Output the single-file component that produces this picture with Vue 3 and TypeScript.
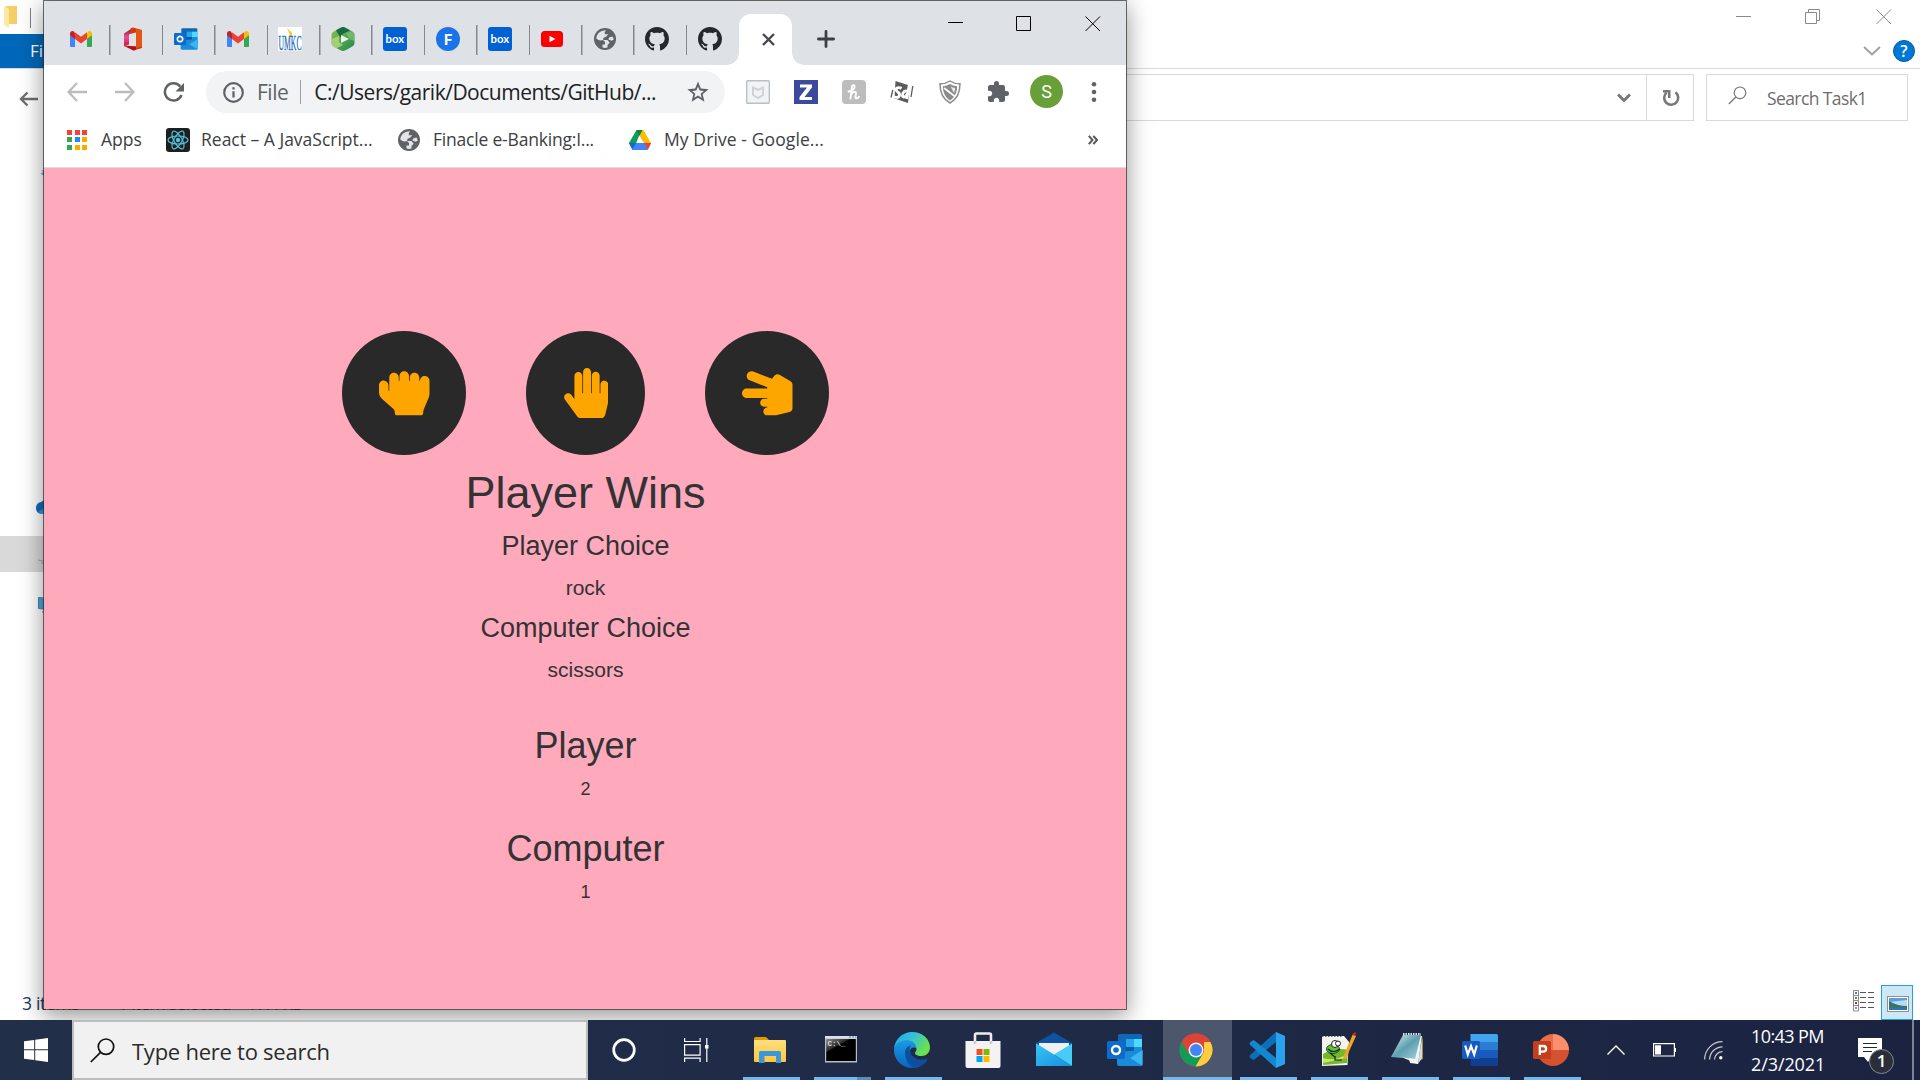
<script setup lang="ts">
interface Tab { icon: string; title: string }
interface TaskApp { icon: string; running?: boolean; active?: boolean; stacked?: boolean }

const tabs: Tab[] = [
  { icon: 'gmail', title: 'Gmail' },
  { icon: 'office', title: 'Office' },
  { icon: 'outlook', title: 'Outlook' },
  { icon: 'gmail', title: 'Gmail' },
  { icon: 'umkc', title: 'UMKC' },
  { icon: 'panopto', title: 'Panopto' },
  { icon: 'box', title: 'Box' },
  { icon: 'fcircle', title: 'F' },
  { icon: 'box', title: 'Box' },
  { icon: 'youtube', title: 'YouTube' },
  { icon: 'globe', title: 'Page' },
  { icon: 'github', title: 'GitHub' },
  { icon: 'github', title: 'GitHub' },
]

const extensions: string[] = ['mcafee', 'zotero', 'honey', 'sd', 'shield', 'puzzle']

const apps: TaskApp[] = [
  { icon: 'explorer', running: true },
  { icon: 'cmd', running: true, stacked: true },
  { icon: 'edge', running: true },
  { icon: 'store' },
  { icon: 'mail' },
  { icon: 'outlook' },
  { icon: 'chrome', running: true, active: true },
  { icon: 'vscode', running: true },
  { icon: 'npp', running: true },
  { icon: 'notepad', running: true },
  { icon: 'word', running: true },
  { icon: 'ppt', running: true },
]

const appGrid: string[] = ['#f44336', '#f44336', '#f44336', '#34a853', '#1e88f5', '#f9ab00', '#34a853', '#f9ab00', '#f9ab00']
</script>

<template>
  <div class="desktop">
    <svg class="sprite" width="0" height="0" aria-hidden="true">
      <defs>
        <linearGradient id="g-pan" x1="0" y1="0" x2="1" y2="1"><stop offset="0" stop-color="#8cc152" /><stop offset="1" stop-color="#1c8a4d" /></linearGradient>
        <linearGradient id="g-off" x1="0" y1="0" x2="0" y2="1"><stop offset="0" stop-color="#8f1020" /><stop offset="0.5" stop-color="#e8508e" /><stop offset="1" stop-color="#d0104c" /></linearGradient>
        <linearGradient id="g-edge" x1="0" y1="0" x2="1" y2="0.5"><stop offset="0" stop-color="#1fa6ea" /><stop offset="0.5" stop-color="#35c1d8" /><stop offset="1" stop-color="#6ae34a" /></linearGradient>
        <linearGradient id="g-edge2" x1="0" y1="0" x2="0" y2="1"><stop offset="0" stop-color="#1a9be4" /><stop offset="1" stop-color="#0a63c0" /></linearGradient>
        <linearGradient id="g-pad" x1="0" y1="0" x2="1" y2="1"><stop offset="0" stop-color="#d9eef3" /><stop offset="0.5" stop-color="#5f9fb0" /><stop offset="1" stop-color="#a8d4dd" /></linearGradient>
        <linearGradient id="g-fold" x1="0" y1="0" x2="0" y2="1"><stop offset="0" stop-color="#ffdf7e" /><stop offset="1" stop-color="#fdc63c" /></linearGradient>
        <linearGradient id="g-cmd" x1="0" y1="0" x2="0.6" y2="0.8"><stop offset="0" stop-color="#8a8a8a" /><stop offset="0.45" stop-color="#2c2c2c" /><stop offset="0.5" stop-color="#000" /></linearGradient>
        <linearGradient id="g-mail" x1="0" y1="0" x2="1" y2="1"><stop offset="0" stop-color="#3fc8f5" /><stop offset="1" stop-color="#0f84d8" /></linearGradient>
        <symbol id="i-gmail" viewBox="0 0 24 24">
          <path fill="#4285f4" d="M1 6v13q0 1 1 1h4v-9z" /><path fill="#34a853" d="M23 6v13q0 1-1 1h-4v-9z" />
          <path fill="#fbbc04" d="M18 6.500v5.500l5-3.800V6.500c0-2.500-2.500-3.200-4-2z" /><path fill="#c5221f" d="M6 6.500V12L1 8.200V6.500c0-2.500 2.500-3.200 4-2z" />
          <path fill="#ea4335" d="M6 12V5.300l6 4.500 6-4.500V12l-6 4.600z" />
        </symbol>
        <symbol id="i-office" viewBox="0 0 24 24">
          <path fill="url(#g-off)" d="M3 6.500 12 .8v5L8 7.500v10l-5 1.700z" /><path fill="#d83b01" d="M12 .5 21 3v18l-8.500 2.500L4.500 18.500 15 19.500V5.500L9.500 6.800V1.500z" />
          <path fill="#f2692c" d="M15 2v19l6-1.500V3.500z" opacity=".55" /><path fill="#b00f1c" d="m3 19 12 .5v3.300l-2.500.7z" />
        </symbol>
        <symbol id="i-outlook" viewBox="0 0 36 36">
          <rect x="11" y="2" width="24" height="26" rx="1.500" fill="#1066b8" /><path fill="#28a8ea" d="M19 7h8v8h-8z" /><path fill="#50d9ff" d="M27 7h8v8h-8z" /><path fill="#0a5aa8" d="M19 15h8v7h-8z" /><path fill="#1490df" d="M27 15h8v5h-8z" />
          <path fill="#0b3f78" d="M11 17l12 8 12-7v6H11z" /><path fill="#1b8ad8" d="M10 20v12q0 2 2 2h22q1.500 0 1.500-2V18z" /><path fill="#39b6f0" d="m23 26 12.500-8v14q0 1-.5 1.500z" />
          <rect x="0" y="9" width="18" height="18" rx="1.500" fill="#0c6cc9" /><circle cx="9" cy="18" r="4" fill="none" stroke="#fff" stroke-width="2.400" />
        </symbol>
        <symbol id="i-umkc" viewBox="0 0 24 24">
          <rect width="24" height="24" fill="#fff" /><path fill="#f2c420" d="m9 1 5 5v4h-4l2-2z" />
          <text x="0.500" y="23" textLength="23" lengthAdjust="spacingAndGlyphs" font-family="Liberation Serif, serif" font-size="21" fill="#1768b4" stroke="#1768b4" stroke-width=".3">UMKC</text>
        </symbol>
        <symbol id="i-panopto" viewBox="0 0 24 24">
          <path fill="url(#g-pan)" d="M12 0q2 0 10 5 1.500 1 1.500 3v8q0 2-1.500 3-8 5-10 5T2 19Q.5 18 .5 16V8q0-2 1.500-3 8-5 10-5z" /><path fill="#176c46" d="M5 3.500Q10 0 12 0t7 3.500l-7 3.300-2.500 3.700z" /><path fill="#b7d77a" d="M.5 12 8 9v6l4 3-7 3.500Q1 19 .5 17z" opacity=".8" /><path fill="#8cc680" d="m15 6 6-1.500q2 1.500 2.500 4V14l-5-2z" opacity=".6" /><path fill="#e9f4e6" d="m10 8 8 4-8 4z" />
        </symbol>
        <symbol id="i-box" viewBox="0 0 24 24">
          <rect width="24" height="24" rx="3" fill="#0061d5" /><text x="2.600" y="16" textLength="18.500" lengthAdjust="spacingAndGlyphs" font-family="Lato, sans-serif" font-weight="700" font-size="11.500" fill="#fff">box</text>
        </symbol>
        <symbol id="i-fcircle" viewBox="0 0 24 24">
          <circle cx="12" cy="12" r="12" fill="#1a73e8" /><text x="12" y="17.500" text-anchor="middle" font-family="Roboto, sans-serif" font-weight="700" font-size="15" fill="#fff">F</text>
        </symbol>
        <symbol id="i-youtube" viewBox="0 0 24 24"><rect x="1" y="4" width="22" height="16" rx="3.500" fill="#f00" /><path fill="#fff" d="m9.500 8.800 6 3.200-6 3.200z" /></symbol>
        <symbol id="i-globe" viewBox="0 0 24 24">
          <circle cx="12" cy="12" r="11" fill="#5f6368" /><path fill="#e1e4e8" d="M13 3.200c-6 .2-9.500 4-9.700 8.300 2 2 4.700 2.500 6.700 1.500l2 2v2.500h-2.500v3.100c1.500.4 3.500.4 5-.1v-2.400l2.200-2.300-2.200-2.800h-4.200V11l3-1.500 2-2.300h-3.500V5z" /><path fill="#e1e4e8" d="M19.500 9.500 16 10.500l-.5 2 3 1.200 2.200-1q0-1.500-1.200-3.200z" />
        </symbol>
        <symbol id="i-github" viewBox="0 0 16 16">
          <path fill="#24292e" d="M8 0C3.580 0 0 3.580 0 8c0 3.540 2.290 6.530 5.470 7.590.4.070.55-.17.55-.38 0-.19-.01-.82-.01-1.490-2.010.37-2.530-.49-2.690-.94-.09-.23-.48-.94-.82-1.130-.28-.15-.68-.52-.01-.53.63-.01 1.080.58 1.230.82.72 1.210 1.870.87 2.330.66.07-.52.28-.87.51-1.070-1.780-.2-3.640-.89-3.640-3.950 0-.87.31-1.590.82-2.150-.08-.2-.36-1.020.08-2.120 0 0 .67-.21 2.200.82.64-.18 1.320-.27 2-.27s1.360.09 2 .27c1.530-1.040 2.200-.82 2.200-.82.44 1.100.16 1.920.08 2.120.51.56.82 1.270.82 2.150 0 3.070-1.870 3.750-3.650 3.950.29.25.54.73.54 1.480 0 1.070-.01 1.930-.01 2.200 0 .21.15.46.55.38A8.010 8.010 0 0 0 16 8c0-4.420-3.580-8-8-8z" />
        </symbol>
        <symbol id="i-mcafee" viewBox="0 0 24 24"><rect x=".7" y=".7" width="22.600" height="22.600" rx="1" fill="#f1f3f4" stroke="#b9c0c5" stroke-width="1.400" /><path fill="none" stroke="#ced3d6" stroke-width="2" d="M7 7.500 12 10l5-2.500V15l-5 3-5-3z" /></symbol>
        <symbol id="i-zotero" viewBox="0 0 24 24"><rect width="24" height="24" fill="#3b4a9c" /><path fill="#fff" d="M6 4.500h12v3L10.500 17H18v3H5.500v-3L13 7.500H6z" /></symbol>
        <symbol id="i-honey" viewBox="0 0 24 24"><rect width="24" height="24" rx="4" fill="#bdbdbd" /><path fill="none" stroke="#fff" stroke-width="1.900" stroke-linecap="round" stroke-linejoin="round" d="M6.500 11.500c4-.5 6.500-3 6-5.500-.4-1.500-2.300-1-2.600 1L8.500 18.500M9.300 14c1.500-2.500 5-3 4.600-.4l-.5 3.300c-.2 2 2.200 1.800 3.600-.2" /></symbol>
        <symbol id="i-sd" viewBox="0 0 24 24"><path fill="#5b5b5b" d="M5.500 1 19.500 5.500 18 23 4.500 18.500z" /><path fill="none" stroke="#fff" stroke-width="2.800" d="M11.500 8.500C8.500 6.500 5.500 8 6.500 10.500s4 2 3 5-4.500 2-7 .8M18 11.500c-3-1.500-5.500.5-5.500 4.500 1 2.500 4.300 0 5-2.500M16.600 19 19.500 4" /><path fill="none" stroke="#5b5b5b" stroke-width="1.300" d="M1 17.500 2.800 10M21 17l1.800-11" /></symbol>
        <symbol id="i-shield" viewBox="0 0 24 24"><path fill="none" stroke="#8b8b8b" stroke-width="1.500" d="M12 1c3 2 6.500 2.800 10 2.800C22 12 19 19.500 12 23 5 19.500 2 12 2 3.800 5.500 3.800 9 3 12 1z" /><path fill="#8b8b8b" d="M12 4c2 1.200 4.500 2 7.200 2.200C19 12 17 17.500 12 20.500 7 17.500 5 12 4.800 6.200 7.500 6 10 5.200 12 4z" /><path stroke="#fff" stroke-width="1.600" d="m6 8 11 8.500" /><path fill="#fff" opacity=".8" d="M12.500 6.500c1.500.8 3 1.200 4.700 1.500-.2 2-.5 3.500-1.200 5z" /></symbol>
        <symbol id="i-puzzle" viewBox="0 0 24 24"><path fill="#5f6368" d="M20.500 11H19V7c0-1.100-.9-2-2-2h-4V3.500a2.500 2.500 0 0 0-5 0V5H4c-1.100 0-1.990.9-1.990 2v3.800H3.500c1.490 0 2.700 1.210 2.700 2.700s-1.210 2.700-2.700 2.700H2V20c0 1.100.9 2 2 2h3.800v-1.500c0-1.490 1.210-2.700 2.700-2.700s2.700 1.210 2.700 2.700V22H17c1.100 0 2-.9 2-2v-4h1.500a2.500 2.500 0 0 0 0-5z" /></symbol>
        <symbol id="i-react" viewBox="0 0 24 24"><rect width="24" height="24" rx="3" fill="#1e1e1e" /><g fill="none" stroke="#53c1de" stroke-width="1.200"><ellipse cx="12" cy="12" rx="10" ry="4" /><ellipse cx="12" cy="12" rx="10" ry="4" transform="rotate(60 12 12)" /><ellipse cx="12" cy="12" rx="10" ry="4" transform="rotate(120 12 12)" /></g><circle cx="12" cy="12" r="2.200" fill="#53c1de" /></symbol>
        <symbol id="i-drive" viewBox="0 0 24 24"><path fill="#0f9d58" d="M8.500 2h5L5.500 21.500 1 15z" /><path fill="#188038" d="M8.500 2H15l-3.300 6z" /><path fill="#fbbc04" d="M14.500 2q1 0 1.500 1l7 12h-7L11.700 8z" /><path fill="#4285f4" d="M1 15h22l-3.500 7h-15z" /><path fill="#1967d2" d="M1 15h7.300l-4 6.500z" /><path fill="#ea4335" d="M16 15h7l-3 6.500z" /><path fill="#fff" d="M12 9.500 15.200 15H8.700z" /></symbol>

        <symbol id="i-explorer" viewBox="0 0 36 36"><path fill="#dd9b06" d="M2 6.500Q2 5 3.500 5H14l3 3v6H2z" /><rect x="2" y="8" width="32" height="22" rx="1" fill="url(#g-fold)" /><path fill="#3a96dd" d="M7 31V20.500Q7 19 8.500 19h19q1.500 0 1.500 1.500V31h-5v-7H12.500v7z" /></symbol>
        <symbol id="i-cmd" viewBox="0 0 36 36"><rect x="2" y="4" width="32" height="26.500" fill="#b9bec6" /><rect x="2" y="4" width="32" height="2.500" fill="#d9e3ee" /><path fill="#5472a8" d="M26 4.500h2v1h-2zM29 4.500h2v1h-2zM32 4.500h1.500v1H32z" /><rect x="3.200" y="7" width="29.600" height="22" fill="url(#g-cmd)" /><text x="4.500" y="14" font-family="Liberation Mono, monospace" font-weight="700" font-size="7.500" fill="#ddd">C:\_</text></symbol>
        <symbol id="i-edge" viewBox="0 0 36 36">
          <path fill="url(#g-edge2)" d="M0 18C1 11 7 7.500 14 8.500c7 .5 9 5.500 9 8-3-2-7-1-7 3 0 8 8 13.500 17.500 8C30 33 24.500 36 18 36 8 36 0 28 0 18z" />
          <path fill="#0c4f9e" d="M11 21c0-4 2.500-7 6-7.500-2 2-2 7 1 10 4 4.500 11 5 15.500 3-3 6.500-9 9.500-13 9.300C15 34 11 28 11 21z" />
          <path fill="url(#g-edge)" d="M0 18C0 8 8 0 18 0c11 0 18 7.500 18 15.500 0 5-4 8.500-8.500 8.500-5 0-6.500-2-6.500-3s1.500-1.700 1.500-4.200C22.500 12 18.500 8.500 12.500 8.500 6 8.500 1 12 0 18z" />
        </symbol>
        <symbol id="i-store" viewBox="0 0 36 36"><path fill="none" stroke="#eee" stroke-width="2.600" d="M10 13V3q0-1.500 1.500-1.500h13Q26 1.500 26 3v10" /><path fill="#f3f3f3" d="M.5 9h35v25q0 2-2 2h-31q-2 0-2-2z" /><path fill="#ccc" d="M8.700 9h2.600v3H8.700zM24.700 9h2.600v3h-2.600z" /><path fill="#f25022" d="M11.500 17h6v6h-6z" /><path fill="#7fba00" d="M18.500 17h6v6h-6z" /><path fill="#00a4ef" d="M11.500 24h6v6h-6z" /><path fill="#ffb900" d="M18.500 24h6v6h-6z" /></symbol>
        <symbol id="i-mail" viewBox="0 0 36 36"><path fill="#0f52a0" d="M0 11 18 .5 36 11v10H0z" /><path fill="#f0f0f0" d="M3 11h30v12H3z" /><path fill="#2cb6f0" d="M0 11.500 36 34H0z" /><path fill="#45cdf8" d="M36 11.500 18 22.500 36 34z" /><path fill="url(#g-mail)" d="M0 34h36L18 22.500 0 11.500z" opacity=".75" /></symbol>
        <symbol id="i-chrome" viewBox="0 0 36 36"><circle cx="18" cy="18" r="16.500" fill="#db4437" /><path fill="#0f9d58" d="M3.700 9.800A16.500 16.500 0 0 0 17.500 34.500l7.600-12.800L10.700 22z" /><path fill="#ffcd40" d="M32.400 10A16.500 16.500 0 0 1 17.500 34.500L26 20V10z" /><path fill="#db4437" d="M3.700 9.800A16.500 16.500 0 0 1 32.400 10H18l-7 10z" /><circle cx="18" cy="18" r="7.500" fill="#f1f1f1" /><circle cx="18" cy="18" r="6" fill="#4285f4" /></symbol>
        <symbol id="i-vscode" viewBox="0 0 36 36"><path fill="#0b70b8" d="M1 25.500l2.500 2q1 .6 2-.1L27 10V0L1.200 23q-1 1.200-.2 2.500z" /><path fill="#1487d0" d="M1 10.500 3.500 8.500q1-.6 2 .1L27 26v10L1.200 13q-1-1.200-.2-2.500z" /><path fill="#2aa3ee" d="M27 0 36 4v28l-9 4z" /></symbol>
        <symbol id="i-npp" viewBox="0 0 36 36"><path fill="#f4f4ee" d="M2 4h22l5 6-1.500 23L2 34z" /><path fill="#76b82a" d="M3 22q12-7 25-4l-1 13-24 2z" /><path fill="#c9e86a" d="M3 26q12 4 24-4l-.5 4-23.500 5z" /><path stroke="#666" stroke-width="1.200" stroke-dasharray="1.500 1.500" d="M2 4.500h21" /><ellipse cx="13" cy="17" rx="6.500" ry="4.500" fill="#5fc334" stroke="#1c4d10" /><circle cx="15" cy="12" r="3.500" fill="#fff" stroke="#222" /><circle cx="18" cy="11.500" r="2.500" fill="#fff" stroke="#222" /><path fill="none" stroke="#123" stroke-width="1.200" d="M8 17q5 5 12 0M10 21l5 4M15 24v4h7" /><path fill="#f2a51e" d="M33 2 36 4 26.500 25l-3 3v-4z" /><path fill="#b92b1f" d="m33 1.500 2-1.500 1 1-.5 3-3-1z" /></symbol>
        <symbol id="i-notepad" viewBox="0 0 36 36"><path fill="#a88649" d="M32 4v23l-6 3z" /><path fill="#eef4f6" d="m13 3 18 1-4 28-8-1z" /><path fill="#cfdade" d="M27 32 31 6v20z" /><path fill="url(#g-pad)" d="M12 3h18l-6 24-24-2z" /><path fill="#f7f7f7" d="M11.500 25.500 24 27l3 5z" /><path stroke="#e8e8e8" stroke-width="1.800" stroke-dasharray="1.500 1" d="M12 2h18" /></symbol>
        <symbol id="i-word" viewBox="0 0 36 36"><path fill="#41a5ee" d="M8.500 2h26q1.500 0 1.500 1.500V10H8.500z" /><path fill="#2b7cd3" d="M8.500 10H36v8H8.500z" /><path fill="#185abd" d="M8.500 18H36v8H8.500z" /><path fill="#103f91" d="M8.500 26H36v6.500q0 1.500-1.500 1.500H10q-1.500 0-1.500-1.500z" /><rect y="9" width="18" height="18" rx="1.500" fill="#185abd" /><path fill="none" stroke="#fff" stroke-width="2.200" d="m3.200 13.500 2.600 9L9 14l3.200 8.500 2.600-9" /></symbol>
        <symbol id="i-ppt" viewBox="0 0 36 36"><path fill="#ed6c47" d="M20 2v16H4A16 16 0 0 1 20 2z" /><path fill="#ff8f6b" d="M20 2a16 16 0 0 1 16 16H20z" /><path fill="#d35230" d="M4 18h32a16 16 0 0 1-32 0z" /><rect y="9" width="18" height="18" rx="1.500" fill="#c43e1c" /><path fill="none" stroke="#fff" stroke-width="2.300" d="M6.800 23V14h3.500a2.700 2.700 0 0 1 0 5.600H7" /></symbol>
      </defs>
    </svg>

    <!-- File Explorer, behind the browser -->
    <section class="explorer">
      <header class="ex-title">
        <div class="ex-quick">
          <svg width="16" height="24" viewBox="0 0 16 24"><path fill="#f5cf66" d="M3 2h11v18H3z" /><path fill="#ffe8a0" d="m1 2 5 3v19l-5-3z" /></svg>
          <i class="ex-bar"></i>
        </div>
        <svg class="ex-ctl" width="156" height="16" viewBox="0 0 156 16" fill="none" stroke="#8a8a8a" stroke-width="1"><path d="M0 7.500h15M72.500 3.500V.5h11v11h-3M69.500 3.500h11v11h-11zM140.500.5l14.500 14.500M155 .5 140.500 15" /></svg>
      </header>
      <div class="ex-ribbon">
        <span class="ex-file">File</span>
        <div class="ex-help">
          <svg width="18" height="10" viewBox="0 0 18 10" fill="none" stroke="#a0a0a0" stroke-width="2"><path d="m1 1 8 7.500L17 1" /></svg>
          <span class="help">?</span>
        </div>
      </div>
      <div class="ex-address">
        <svg class="ex-back" width="20" height="16" viewBox="0 0 20 16" fill="none" stroke="#6f6f6f" stroke-width="2.400"><path d="M19 8H2M8.500 1.500 2 8l6.500 6.500" /></svg>
        <div class="ex-path">
          <div class="ex-drop"><svg width="14" height="10" viewBox="0 0 14 10" fill="none" stroke="#777" stroke-width="3"><path d="m1 1.500 6 6 6-6" /></svg></div>
          <div class="ex-refresh"><svg width="18" height="18" viewBox="0 0 18 18" fill="none" stroke="#777" stroke-width="2.600"><path d="M13.500 3.300a7 7 0 1 1-9 .3M1 2.300h6.200V9" /></svg></div>
        </div>
        <div class="ex-search">
          <svg width="19" height="19" viewBox="0 0 19 19" fill="none" stroke="#777" stroke-width="1.200"><circle cx="12" cy="6.800" r="5.800" /><path d="M7.800 11 .8 18" /></svg>
          <span>Search Task1</span>
        </div>
      </div>
      <div class="ex-body">
        <nav class="ex-nav">
          <div class="nav-row pin"><svg width="14" height="14" viewBox="0 0 14 14"><path fill="#2a8ad4" d="m4 0 2 4h6v6H6l-2 4 1-5H1l3-1.500H0L4 6 1 4.500h4z" /></svg></div>
          <div class="nav-row cloud"><svg width="22" height="14" viewBox="0 0 22 14"><path fill="#0f6cbd" d="M0 8q0-5 5-6 5-4 10 0v12H5q-5-1-5-6z" /><path fill="#2a9be6" d="m2 12 8-5 8 7H5z" /></svg></div>
          <div class="nav-row chosen"><svg width="14" height="6" viewBox="0 0 14 6" fill="none" stroke="#9aa6ad"><path d="m0 2 4 1h8M3 5h8" /></svg></div>
          <div class="nav-row pc"><svg width="20" height="16" viewBox="0 0 20 16"><path fill="#46a8e8" stroke="#5b7d91" d="m.5.500 18 2v11l-18-2z" /><path stroke="#777" d="M4 15h12" /></svg></div>
        </nav>
      </div>
      <footer class="ex-status">
        <span class="st-a">3 items</span><span class="st-b">1 item selected</span><span class="st-c">17.4 KB</span>
        <div class="views">
          <svg width="22" height="22" viewBox="0 0 22 22" fill="none" stroke="#8a8a8a"><path d="M.5.500h5v20.500h-5zM.5 5.500h5M.5 10.500h5M.5 15.500h5" /><path stroke="#555" d="M7 2.500h6M15 2.500h6M7 7.500h6M15 7.500h6M7 12.500h6M15 12.500h6M7 17.500h6M15 17.500h6" /><path stroke="#3c88a5" stroke-width="2" d="M2 3h2" /><path stroke="#6d8a3c" stroke-width="2" d="M2 8h2" /><path stroke="#b7381f" stroke-width="2" d="M2 13h2" /><path stroke="#7da08e" stroke-width="2" d="M2 18h2" /></svg>
          <div class="view-on"><svg width="22" height="16" viewBox="0 0 22 16"><rect x=".5" y=".5" width="21" height="15" fill="#fff" stroke="#909090" /><path fill="#5f9fe0" d="M2 2h18v12H2z" /><path fill="#b9daf5" d="M2 6 20 4v6H2z" /><path fill="#3a7460" d="M2 5q8 5 18 5v2H2z" /><path fill="#2f74b5" d="M2 11.500h18V14H2z" /></svg></div>
        </div>
      </footer>
    </section>

    <!-- Browser window -->
    <section class="browser">
      <header class="strip">
        <div class="tabs">
          <div v-for="(tab, i) in tabs" :key="i" class="tab" :class="{ last: i === tabs.length - 1 }" :aria-label="tab.title">
            <svg width="24" height="24"><use :href="'#i-' + tab.icon" /></svg>
          </div>
          <div class="tab-active"><svg width="13" height="13" viewBox="0 0 13 13" fill="none" stroke="#45494d" stroke-width="2.400"><path d="m1 1 11 11M12 1 1 12" /></svg></div>
          <svg class="plus" width="18" height="18" viewBox="0 0 18 18" stroke="#3c4043" stroke-width="2.800" stroke-linecap="round"><path d="M9 1.400v15.200M1.400 9h15.200" /></svg>
        </div>
        <svg class="win-ctl" width="153" height="16" viewBox="0 0 153 16" fill="none" stroke="#000"><path d="M0 6.500h15M68.500.500h14v14h-14z" /><path d="m137.500.5 14.500 14.500M152 .5 137.500 15" /></svg>
      </header>
      <div class="toolbar">
        <svg class="t-back" width="20" height="20" viewBox="0 0 20 20" fill="none" stroke="#babcbe" stroke-width="2.300"><path d="M20 10H2M10 1 1.500 10l8.500 9" /></svg>
        <svg class="t-fwd" width="20" height="20" viewBox="0 0 20 20" fill="none" stroke="#babcbe" stroke-width="2.300"><path d="M0 10h18M10 1l8.500 9-8.500 9" /></svg>
        <svg class="t-load" width="21" height="21" viewBox="0 0 21 21"><path fill="none" stroke="#5f6368" stroke-width="2.500" d="M17.300 4.700A8.600 8.600 0 1 0 18.500 13" /><path fill="#5f6368" d="M21 1v8.500h-8.500z" /></svg>
        <div class="omni">
          <svg width="21" height="21" viewBox="0 0 21 21"><circle cx="10.500" cy="10.500" r="9.300" fill="none" stroke="#5f6368" stroke-width="2.200" /><path stroke="#5f6368" stroke-width="2.300" d="M10.500 9.200v6.300M10.500 5.300v2.300" /></svg>
          <span class="scheme">File</span><i class="o-sep"></i><span class="url">C:/Users/garik/Documents/GitHub/...</span>
          <svg class="star" width="22" height="22" viewBox="0 0 24 24"><path fill="#5f6368" d="m23.500 8.900-8.400-.7L12 .5 8.900 8.200l-8.400.7 6.400 5.500L5 22.600l7-4.300 7 4.300-1.900-8.200zM12 15.900l-4 2.400 1.100-4.500-3.500-3 4.600-.4L12 6.100l1.800 4.300 4.600.4-3.500 3 1.100 4.500z" /></svg>
        </div>
        <div class="exts"><svg v-for="e in extensions" :key="e" width="24" height="24"><use :href="'#i-' + e" /></svg></div>
        <span class="avatar">S</span>
        <svg class="dots" width="6" height="20" viewBox="0 0 6 20" fill="#5f6368"><circle cx="3" cy="2.300" r="2.300" /><circle cx="3" cy="10" r="2.300" /><circle cx="3" cy="17.700" r="2.300" /></svg>
      </div>
      <div class="marks">
        <div class="grid9"><i v-for="(c, i) in appGrid" :key="i" :style="{ background: c }"></i></div>
        <span class="m-apps">Apps</span>
        <svg width="24" height="24"><use href="#i-react" /></svg><span class="m-react">React – A JavaScript...</span>
        <svg width="24" height="24"><use href="#i-globe" /></svg><span class="m-fin">Finacle e-Banking:I...</span>
        <svg width="24" height="24"><use href="#i-drive" /></svg><span class="m-drive">My Drive - Google...</span>
        <svg class="more" width="10" height="10" viewBox="0 0 10 10" fill="none" stroke="#54585c" stroke-width="2"><path d="m.8.800 3.700 4.200L.8 9.200M5.300.800 9 5 5.300 9.200" /></svg>
      </div>
      <main class="game">
        <div class="hands">
          <button class="hand"><svg width="50.500" height="50.500" viewBox="0 0 512 512"><path d="M464.800 80c-26.900-.4-48.800 21.200-48.800 48h-8V96.800c0-26.300-20.900-48.300-47.200-48.800-26.900-.4-48.800 21.200-48.800 48v32h-8V80.800c0-26.300-20.900-48.300-47.200-48.800-26.900-.4-48.800 21.200-48.800 48v48h-8V96.800c0-26.300-20.900-48.300-47.200-48.800-26.900-.4-48.800 21.200-48.800 48v136l-8-7.100v-48.100c0-26.300-20.900-48.300-47.200-48.800C21.900 127.600 0 149.200 0 176v66.400c0 27.400 11.700 53.500 32.200 71.800l111.700 99.300c10.200 9.100 16.100 22.200 16.100 35.900v6.700c0 13.300 10.700 24 24 24h240c13.300 0 24-10.700 24-24v-2.900c0-12.800 2.600-25.500 7.500-37.300l49-116.300c5-11.800 7.500-24.500 7.500-37.300V128.800c0-26.300-20.900-48.400-47.200-48.800z" /></svg></button>
          <button class="hand narrow"><svg width="44.500" height="50.500" viewBox="0 0 448 512"><path d="M408.781 128.007C386.356 127.578 368 146.360 368 168.790V256h-8V79.790c0-22.430-18.356-41.212-40.781-40.783C297.488 39.423 280 57.169 280 79v177h-8V40.790C272 18.360 253.644-.422 231.219.007 209.488.423 192 18.169 192 40v216h-8V80.790c0-22.430-18.356-41.212-40.781-40.783C121.488 40.423 104 58.169 104 80v235.992l-31.648-43.519c-12.993-17.866-38.009-21.817-55.877-8.823-17.865 12.994-21.815 38.010-8.822 55.877l125.601 172.705A48 48 0 0 0 172.073 512h197.590c22.274 0 41.622-15.324 46.724-37.006l26.508-112.660a192.011 192.011 0 0 0 5.104-43.975V168c.001-21.831-17.487-39.577-39.218-39.993z" /></svg></button>
          <button class="hand"><svg width="50.500" height="50.500" viewBox="0 0 512 512"><path d="M216 440c0-22.092 17.909-40 40-40v-8h-32c-22.091 0-40-17.908-40-40s17.909-40 40-40h32v-8H48c-26.510 0-48-21.490-48-48s21.490-48 48-48h208v-13.572l-177.551-69.740c-24.674-9.694-36.818-37.555-27.125-62.228 9.693-24.674 37.554-36.817 62.228-27.124l190.342 74.765 24.872-31.090c12.306-15.381 33.978-19.515 51.081-9.741l112 64A40.002 40.002 0 0 1 512 168v240c0 18.562-12.770 34.686-30.838 38.937l-136 32A39.982 39.982 0 0 1 336 480h-80c-22.091 0-40-17.908-40-40z" /></svg></button>
        </div>
        <h1>Player Wins</h1>
        <h3>Player Choice</h3>
        <p class="choice">rock</p>
        <h3>Computer Choice</h3>
        <p class="choice">scissors</p>
        <h2 class="first">Player</h2>
        <p class="score">2</p>
        <h2>Computer</h2>
        <p class="score">1</p>
      </main>
    </section>

    <!-- Taskbar -->
    <footer class="taskbar">
      <div class="start"><svg width="24" height="24" viewBox="0 0 24 24" fill="#fff"><path d="M0 3.300 10.200 1.900v9.400H0zM11.200 1.700 24 0v11.300H11.200zM0 12.300h10.200v9.700L0 20.700zM11.200 12.300H24V24l-12.800-1.800z" /></svg></div>
      <div class="search">
        <svg width="25" height="25" viewBox="0 0 25 25" fill="none" stroke="#111" stroke-width="1.700"><circle cx="16" cy="8.700" r="7.700" /><path d="M10.500 14.300.8 24" /></svg>
        <span>Type here to search</span>
      </div>
      <div class="sys"><svg width="24" height="24" viewBox="0 0 24 24"><circle cx="12" cy="12" r="10.300" fill="none" stroke="#fff" stroke-width="2.700" /></svg></div>
      <div class="sys"><svg width="25" height="24" viewBox="0 0 25 24" fill="none" stroke="#fff" stroke-width="1.200"><path d="M.6 0v3.500h15.500V0M.6 6.600h15.500v10.600H.6zM.6 24v-3.800h15.500V24M22.800 0v24" /><path stroke="none" fill="#fff" d="M21 7h3.500v3.500H21z" /></svg></div>
      <div class="apps">
        <div v-for="a in apps" :key="a.icon" class="app" :class="{ running: a.running, active: a.active, stacked: a.stacked }">
          <svg width="36" height="36"><use :href="'#i-' + a.icon" /></svg>
        </div>
      </div>
      <div class="tray">
        <svg class="up" width="18" height="10" viewBox="0 0 18 10" fill="none" stroke="#fff" stroke-width="1.400"><path d="M.5 9.500 9 1l8.500 8.500" /></svg>
        <svg class="bat" width="23" height="14" viewBox="0 0 23 14"><path fill="none" stroke="#fff" stroke-width="1.200" d="M.6.600h20.800v12.400H.6z" /><path fill="#fff" d="M2 2.200h6v9.200H2zM22 5h1v4h-1z" /></svg>
        <svg class="wifi" width="19" height="19" viewBox="0 0 19 19" fill="none" stroke="#c9ccd4" stroke-width="1.200"><path d="M.6 18.500A18 18 0 0 1 18.500.7M5.600 18.500A13 13 0 0 1 18.500 5.800M10.500 18.500a8 8 0 0 1 8-7.800" /><circle cx="16.800" cy="16.700" r="1.700" fill="#fff" stroke="none" /></svg>
        <div class="clock"><span class="time">10:43 PM</span><span class="date">2/3/2021</span></div>
        <div class="note">
          <svg width="24" height="24" viewBox="0 0 24 24"><path fill="#fff" d="M0 0h24v19H13.500L10 24l-4-5H0z" /><path stroke="#1b2440" stroke-width="1.200" d="M5 5.500h14M5 9.500h14M5 13.500h9" /></svg>
          <span class="badge">1</span>
        </div>
        <i class="peek"></i>
      </div>
    </footer>
  </div>
</template>

<style>
html, body { margin: 0; overflow: hidden; background: #fff; }
</style>

<style scoped>
.desktop { position: relative; width: 1920px; height: 1080px; overflow: hidden; display: flex; flex-direction: column; background: #fff; font-family: "Open Sans", "Noto Sans", sans-serif; }
.desktop * { box-sizing: border-box; }
.desktop svg { display: block; flex: none; }
.sprite { position: absolute; }
span { white-space: nowrap; }

.explorer { height: 1020px; display: flex; flex-direction: column; background: #fff; }
.ex-title { height: 34px; display: flex; justify-content: space-between; padding: 0 28px 0 3px; }
.ex-quick { display: flex; gap: 11px; padding-top: 4px; }
.ex-bar { width: 1px; height: 20px; margin-top: 4px; background: #808080; }
.ex-ctl { margin-top: 9px; }
.ex-ribbon { height: 35px; display: flex; justify-content: space-between; border-bottom: 1px solid #dadada; }
.ex-file { width: 86px; height: 34px; padding-left: 30px; background: #0067b8; color: #fff; font-size: 17px; line-height: 34px; }
.ex-help { display: flex; align-items: center; gap: 12px; padding-right: 5px; }
.help { width: 22px; height: 22px; border-radius: 50%; background: #0078d7; border: 1px solid #00599f; color: #fff; font-size: 16px; font-weight: 600; line-height: 20px; text-align: center; }
.ex-address { display: flex; height: 52px; padding: 5px 12px 0 19px; }
.ex-back { margin-top: 17px; }
.ex-path { width: 1577px; height: 47px; margin-left: 78px; display: flex; justify-content: flex-end; border: 1px solid #d9d9d9; }
.ex-drop { width: 45px; display: flex; align-items: center; justify-content: center; }
.ex-refresh { width: 47px; display: flex; align-items: center; justify-content: center; padding-left: 1px; border-left: 1px solid #d9d9d9; }
.ex-search { width: 202px; height: 47px; margin-left: 12px; display: flex; align-items: center; gap: 20px; padding-left: 21px; border: 1px solid #d9d9d9; color: #6d6d6d; font-size: 17.500px; letter-spacing: -0.6px; }
.ex-search svg { margin-top: -4px; }
.ex-search span { margin-top: 1px; }
.ex-body { flex: 1; }
.ex-nav { width: 86px; display: flex; flex-direction: column; }
.nav-row { height: 36px; display: flex; align-items: center; padding-left: 38px; }
.nav-row.pin { margin-top: 34px; padding-left: 40px; }
.nav-row.cloud { margin-top: 298px; padding-left: 36px; }
.nav-row.chosen { margin-top: 11px; background: #d9d9d9; padding-top: 14px; }
.nav-row.pc { margin-top: 15px; }
.ex-status { height: 37px; display: flex; align-items: flex-start; padding: 7px 7px 0 22px; font-size: 17.500px; line-height: 25px; color: #1e395b; }
.ex-status > span { padding-top: 1px; }
.st-a { width: 96px; letter-spacing: -0.3px; }
.st-b { width: 129px; letter-spacing: -0.7px; }
.st-c { letter-spacing: -0.8px; }
.views { display: flex; margin: -5px 0 0 auto; }
.views > svg { margin: 5px 6px 0 0; }
.view-on { width: 32px; height: 35px; display: flex; align-items: center; justify-content: center; padding: 2px 0 0 2px; background: #cce8f6; border: 1px solid #26a0da; }

.browser { position: absolute; left: 43px; top: 0; width: 1084px; height: 1010px; display: flex; flex-direction: column; border: 1px solid rgba(40, 40, 40, .68); box-shadow: 0 6px 22px rgba(0, 0, 0, .42); background: #fff; background-clip: padding-box; }
.strip { height: 64px; display: flex; justify-content: space-between; background: #dee1e6; }
.tabs { display: flex; padding-left: 14.500px; }
.tab { width: 52.420px; height: 64px; display: flex; align-items: center; padding: 12px 0 0 10.200px; background: linear-gradient(#85898d, #85898d) right 24px / 1.500px 30px no-repeat; }
.tab.last { background: none; width: 52px; }
.tab-active { position: relative; width: 53px; height: 51px; margin-top: 13px; display: flex; align-items: center; justify-content: center; padding: 0 0 0 6px; background: #fff; border-radius: 12px 12px 0 0; }
.tab-active::before, .tab-active::after { content: ""; position: absolute; bottom: 0; width: 12px; height: 12px; }
.tab-active::before { left: -12px; background: radial-gradient(circle at 0 0, transparent 11.500px, #fff 12px); }
.tab-active::after { right: -12px; background: radial-gradient(circle at 100% 0, transparent 11.500px, #fff 12px); }
.plus { margin: 29px 0 0 24.500px; }
.win-ctl { margin: 15px 25px 0 0; }

.toolbar { height: 54px; display: flex; align-items: center; padding: 0 29px 0 23px; }
.t-back, .t-fwd { margin-bottom: 1px; }
.t-fwd { margin-left: 28px; }
.t-load { margin-left: 27.500px; }
.omni { width: 519px; height: 42px; margin-left: 22.500px; display: flex; align-items: center; padding: 0 16px 0 17px; border-radius: 21px; background: #f1f3f4; font-size: 21px; }
.scheme { width: 43px; margin-left: 13px; color: #5f6368; letter-spacing: -0.5px; }
.o-sep { width: 1.500px; height: 24px; background: #9aa0a6; }
.url { width: 371px; margin-left: 13px; color: #202124; letter-spacing: -0.5px; }
.star { margin-left: 3px; }
.exts { display: flex; gap: 24px; margin-left: 21px; }
.avatar { width: 33px; height: 33px; margin: 0 0 1px 20px; border-radius: 50%; background: #689f38; color: #fff; font-family: Roboto, sans-serif; font-size: 18px; line-height: 33px; text-align: center; }
.dots { margin-left: 28px; }

.marks { height: 49px; display: flex; align-items: center; padding: 0 28px 6px 23px; border-bottom: 1px solid #dadce0; font-size: 17.500px; color: #3c4043; }
.grid9 { width: 20px; height: 20px; margin-bottom: 1px; display: grid; grid-template-columns: repeat(3, 5px); grid-auto-rows: 5px; gap: 2.500px; }
.marks span { margin-bottom: 2px; }
.m-apps { width: 65px; margin-left: 14px; }
.m-react { width: 196px; margin-left: 11px; }
.m-fin { width: 195px; margin-left: 12px; letter-spacing: -0.200px; }
.m-drive { margin-left: 12px; letter-spacing: 0.100px; }
.more { margin-left: auto; }

.game { flex: 1; display: flex; flex-direction: column; align-items: center; padding: 163px 0 0 1px; background: #ffa9bd; color: #333; font-family: "Liberation Sans", Arial, sans-serif; text-align: center; }
.hands { display: flex; gap: 60px; }
.hand { width: 124px; height: 124px; padding: 0 0 0 1px; border: 0; border-radius: 50%; display: flex; align-items: center; justify-content: center; background: #292929; }
.hand.narrow { width: 119px; }
.hand svg { fill: #ffa500; }
h1, h2, h3, p { margin: 0; font-weight: 400; }
h1 { margin-top: 13px; font-size: 45px; line-height: 50px; }
h3 { margin-top: 13px; font-size: 27px; line-height: 30px; }
.choice { margin-top: 15px; font-size: 21px; line-height: 24px; }
h2 { margin-top: 30px; font-size: 36px; line-height: 40px; }
h2.first { margin-top: 44px; }
.score { margin-top: 13px; font-size: 18px; line-height: 20px; }

.taskbar { position: relative; height: 60px; display: flex; background: linear-gradient(90deg, #222f48, #1f2b47 50%, #1b2341); color: #fff; }
.start { width: 72px; display: flex; align-items: center; justify-content: center; }
.search { width: 516px; display: flex; align-items: center; padding-left: 16px; gap: 17px; border: 2px solid #bdbdbd; background: #f1f1f1; color: #2b2b2b; font-size: 22px; letter-spacing: -0.250px; }
.search span { margin-top: 1px; }
.sys { width: 72px; display: flex; align-items: center; justify-content: center; }
.apps { display: flex; gap: 2px; margin-left: 5px; }
.app { position: relative; width: 69px; display: flex; align-items: center; justify-content: center; padding-right: 3px; }
.app.active { background: #4c566d; }
.app.running::after { content: ""; position: absolute; left: 6px; right: 6px; bottom: 0; height: 3px; background: #76b9ed; }
.app.active::after { left: 0; right: 0; }
.app.stacked::after { background: linear-gradient(90deg, #76b9ed 43px, #5a8db8 43px); }
.tray { flex: 1; display: flex; align-items: center; padding-left: 20px; }
.bat { margin-left: 28px; }
.wifi { margin-left: 28px; }
.clock { width: 74px; margin-left: 28px; display: flex; flex-direction: column; font-size: 18px; line-height: 28px; }
.time { letter-spacing: -0.6px; }
.date { letter-spacing: -0.1px; }
.note { position: relative; margin: 0 0 1px 33px; }
.badge { position: absolute; left: 11px; top: 11px; width: 25px; height: 25px; border-radius: 50%; background: #2b2d38; border: 1px solid #858995; font-size: 17px; font-weight: 600; line-height: 22px; text-align: center; }
.peek { width: 2px; height: 60px; margin-left: 30px; background: #7d8393; }
</style>
